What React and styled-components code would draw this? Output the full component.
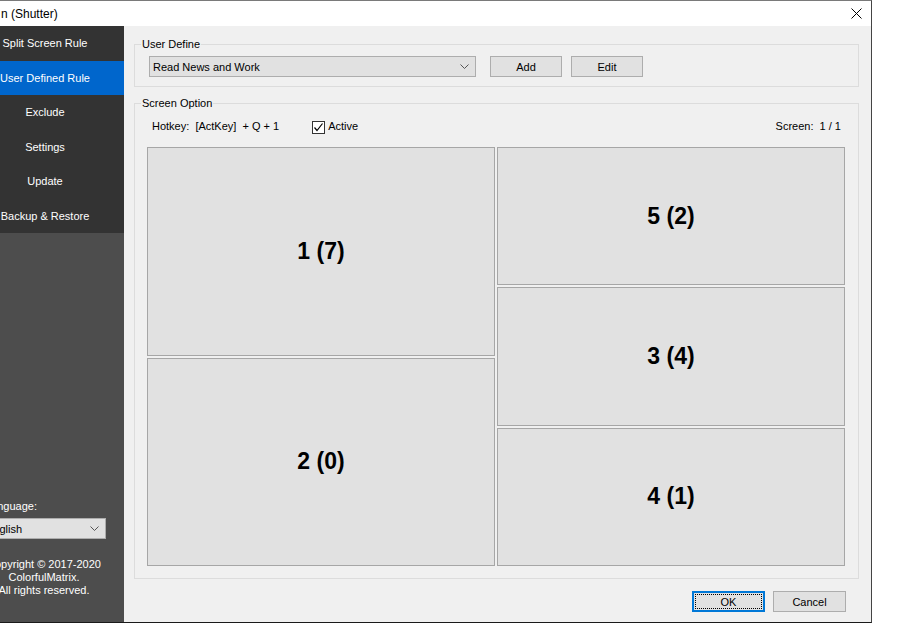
import React from 'react'
import styled, { createGlobalStyle } from 'styled-components'

const GlobalStyle = createGlobalStyle`
  html, body {
    margin: 0;
    padding: 0;
    background: #ffffff;
    overflow: hidden;
  }
  body {
    font-family: "Liberation Sans", Arial, sans-serif;
    font-size: 11px;
    color: #000;
  }
`

// the dialog is partly off the left edge of the screen
const Window = styled.div`
  margin-left: -35px;
  width: 907px;
  height: 623px;
  box-sizing: border-box;
  border: 1px solid #7a7a7a;
  border-bottom-color: #1a1a1a;
  border-right-color: #444;
  display: flex;
  flex-direction: column;
  background: #f0f0f0;
`

const TitleBar = styled.div`
  height: 25px;
  background: #fff;
  display: flex;
  align-items: center;
  justify-content: space-between;
  padding-left: 35px;
  flex-shrink: 0;
`

const Title = styled.span`
  font-size: 12px;
  color: #000;
`

const CloseButton = styled.div`
  width: 30px;
  height: 25px;
  display: flex;
  align-items: center;
  justify-content: center;
`

const Body = styled.div`
  flex: 1;
  display: flex;
  min-height: 0;
`

const Sidebar = styled.div`
  width: 158px;
  flex-shrink: 0;
  background: #4d4d4d;
  display: flex;
  flex-direction: column;
  overflow: hidden;
`

const MenuItem = styled.div`
  height: 34.5px;
  display: flex;
  align-items: center;
  justify-content: center;
  white-space: nowrap;
  color: #fff;
  background: ${props => props.active ? '#0066cc' : '#333333'};
`

const SideFooter = styled.div`
  margin-top: auto;
  padding: 0 18px 25px 16px;
  color: #fff;
`

const LangLabel = styled.div`
  line-height: 16px;
  margin-bottom: 4px;
  padding-left: 3px;
`

const Select = styled.div`
  height: 21px;
  box-sizing: border-box;
  background: #e1e1e1;
  border: 1px solid #adadad;
  color: #000;
  display: flex;
  align-items: center;
  justify-content: space-between;
  padding: 0 6px 0 3px;
  ${props => props.w ? `width: ${props.w}px;` : ''}
`

const Copyright = styled.div`
  margin-top: 19px;
  line-height: 13px;
  text-align: center;
  white-space: nowrap;
`

const Main = styled.div`
  flex: 1;
  display: flex;
  flex-direction: column;
  padding: 10px 12px 0 10px;
  min-width: 0;
`

const Group = styled.fieldset`
  margin: 0;
  min-width: 0;
  border: 1px solid #dcdcdc;
  padding: ${props => props.pad};
  ${props => props.grow ? 'flex: 1; display: flex; flex-direction: column;' : ''}
  & + & {
    margin-top: 8px;
  }
`

const Legend = styled.legend`
  padding: 0 1px;
  margin-left: 6px;
  line-height: 16px;
`

const Row = styled.div`
  display: flex;
  align-items: center;
  padding: 0 14px;
`

const Button = styled.div`
  width: ${props => props.w || 72}px;
  height: 21px;
  box-sizing: border-box;
  background: #e1e1e1;
  border: 1px solid #adadad;
  display: flex;
  align-items: center;
  justify-content: center;
  margin-left: ${props => props.gap || 0}px;
`

const DefaultButton = styled(Button)`
  border: 2px solid #0078d7;
  position: relative;
  &::after {
    content: '';
    position: absolute;
    inset: 1px;
    border: 1px dotted #000;
  }
`

const InfoRow = styled.div`
  display: flex;
  align-items: center;
  height: 20px;
  padding: 0 17px 0 17px;
  margin-bottom: 11px;
  white-space: pre;
`

const Check = styled.div`
  width: 13px;
  height: 13px;
  box-sizing: border-box;
  border: 1px solid #333;
  background: #fff;
  margin: 2px 3px 0 33px;
  display: flex;
  align-items: center;
  justify-content: center;
`

const Spacer = styled.div`
  flex: 1;
`

const Grid = styled.div`
  flex: 1;
  display: grid;
  grid-template-columns: 1fr 1fr;
  column-gap: 2px;
  margin: 0 13px 0 12px;
`

const Column = styled.div`
  display: flex;
  flex-direction: column;
  gap: 2px;
`

const Zone = styled.div`
  flex: 1;
  background: #e1e1e1;
  border: 1px solid #a6a6a6;
  display: flex;
  align-items: center;
  justify-content: center;
  font-family: "Liberation Sans", Arial, sans-serif;
  font-weight: bold;
  font-size: 23px;
`

const Footer = styled.div`
  height: 43px;
  flex-shrink: 0;
  display: flex;
  justify-content: flex-end;
  align-items: flex-start;
  padding: 12px 13px 0 0;
  box-sizing: border-box;
`

const Chevron = () => (
  <svg width="9" height="5" viewBox="0 0 9 5">
    <polyline points="0.5,0.5 4.5,4.5 8.5,0.5" fill="none" stroke="#555" strokeWidth="1" />
  </svg>
)

const menu = ['Split Screen Rule', 'User Defined Rule', 'Exclude', 'Settings', 'Update', 'Backup & Restore']

export default function App () {
  return (
    <>
      <GlobalStyle />
      <Window>
        <TitleBar>
          <Title>n (Shutter)</Title>
          <CloseButton>
            <svg width="11" height="11" viewBox="0 0 11 11">
              <path d="M0.5 0.5 L10.5 10.5 M10.5 0.5 L0.5 10.5" stroke="#000" strokeWidth="1" />
            </svg>
          </CloseButton>
        </TitleBar>
        <Body>
          <Sidebar>
            {menu.map(m => (
              <MenuItem key={m} active={m === 'User Defined Rule'}>{m}</MenuItem>
            ))}
            <SideFooter>
              <LangLabel>Language:</LangLabel>
              <Select>
                <span>English</span>
                <Chevron />
              </Select>
              <Copyright>
                Copyright © 2017-2020<br />
                ColorfulMatrix.<br />
                All rights reserved.
              </Copyright>
            </SideFooter>
          </Sidebar>
          <Main>
            <Group pad="4px 0 9px 0">
              <Legend>User Define</Legend>
              <Row>
                <Select w={327}>
                  <span>Read News and Work</span>
                  <Chevron />
                </Select>
                <Button gap={14}>Add</Button>
                <Button gap={9}>Edit</Button>
              </Row>
            </Group>
            <Group grow pad="5px 0 12px 0">
              <Legend>Screen Option</Legend>
              <InfoRow>
                <span>Hotkey:  [ActKey]  + Q + 1</span>
                <Check>
                  <svg width="11" height="11" viewBox="0 0 11 11">
                    <polyline points="1.5,5.5 4,8.5 9.5,1.5" fill="none" stroke="#000" strokeWidth="1.2" />
                  </svg>
                </Check>
                <span>Active</span>
                <Spacer />
                <span>Screen:  1 / 1</span>
              </InfoRow>
              <Grid>
                <Column>
                  <Zone>1 (7)</Zone>
                  <Zone>2 (0)</Zone>
                </Column>
                <Column>
                  <Zone>5 (2)</Zone>
                  <Zone>3 (4)</Zone>
                  <Zone>4 (1)</Zone>
                </Column>
              </Grid>
            </Group>
            <Footer>
              <DefaultButton w={73}>OK</DefaultButton>
              <Button w={73} gap={8}>Cancel</Button>
            </Footer>
          </Main>
        </Body>
      </Window>
    </>
  )
}
